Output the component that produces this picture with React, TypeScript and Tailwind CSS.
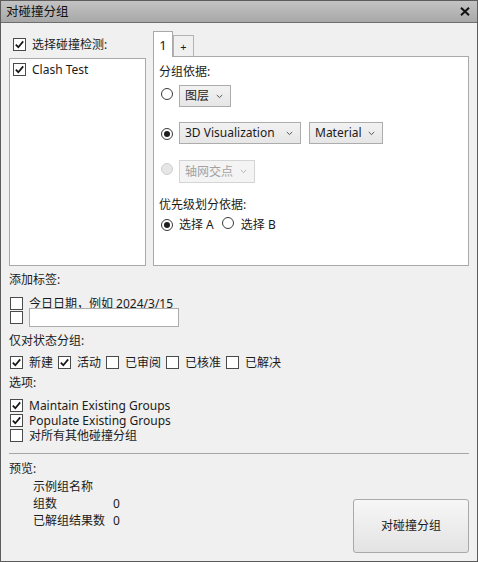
import React from 'react';

type CheckProps = {
  checked?: boolean;
};

const Check = ({ checked }: CheckProps) => (
  <span className="inline-flex h-[13px] w-[13px] shrink-0 items-center justify-center border border-[#4a4a4a] bg-white">
    {checked && (
      <svg width="11" height="11" viewBox="0 0 11 11">
        <path d="M1.8 5.6 L4.3 8.2 L9.2 2.4" fill="none" stroke="#151515" strokeWidth="1.7" />
      </svg>
    )}
  </span>
);

type RadioProps = {
  selected?: boolean;
  disabled?: boolean;
};

const Radio = ({ selected, disabled }: RadioProps) => (
  <span
    className={`inline-flex h-[12px] w-[12px] shrink-0 items-center justify-center rounded-full border ${
      disabled ? 'border-[#cfcfcf] bg-[#e6e6e6]' : 'border-[#3a3a3a] bg-white'
    }`}
  >
    {selected && <span className="h-[6px] w-[6px] rounded-full bg-[#1e1e1e]" />}
  </span>
);

type SelectProps = {
  label: string;
  width: string;
  disabled?: boolean;
};

const Select = ({ label, width, disabled }: SelectProps) => (
  <div
    className={`flex h-[22px] items-center justify-between border pl-[5px] pr-[7px] ${width} ${
      disabled
        ? 'border-[#d4d4d4] bg-[#f4f4f4] text-[#a2a2a2]'
        : 'border-[#acacac] bg-linear-to-b from-[#f2f2f2] to-[#e6e6e6]'
    }`}
  >
    <span>{label}</span>
    <svg width="7" height="5" viewBox="0 0 7 5">
      <path d="M0.8 1 L3.5 3.6 L6.2 1" fill="none" stroke={disabled ? '#b4b4b4' : '#555'} strokeWidth="1" />
    </svg>
  </div>
);

const CheckRow = ({ checked, label }: { checked?: boolean; label: string }) => (
  <div className="flex h-[15px] items-center gap-[6px] pl-[1px]">
    <Check checked={checked} />
    <span className="block h-[15px] leading-[15px]">{label}</span>
  </div>
);

export default function App() {
  const statuses = [
    { label: '新建', checked: true },
    { label: '活动', checked: true },
    { label: '已审阅', checked: false },
    { label: '已核准', checked: false },
    { label: '已解决', checked: false }
  ];

  return (
    <div
      className="flex h-[562px] w-[478px] flex-col border border-[#5c5c5c] bg-[#f0f0f0] text-[12px] leading-[16px] text-[#1b1b1b]"
      style={{ fontFamily: '"Noto Sans", "Noto Sans CJK SC", sans-serif' }}
    >
      {/* Title bar */}
      <div className="flex h-[22px] shrink-0 items-center justify-between border-b border-[#6e6e6e] bg-linear-to-b from-[#c3c3c3] to-[#a8a8a8] pl-[5px] pr-[7px]">
        <span className="text-[12.5px] text-[#111]">对碰撞分组</span>
        <svg width="10" height="9" viewBox="0 0 10 9">
          <path d="M1 0.8 L9 8.2 M9 0.8 L1 8.2" stroke="#111" strokeWidth="2" />
        </svg>
      </div>

      <div className="flex flex-1 flex-col px-[8px] pt-[8px]">
        {/* Top section */}
        <div className="flex gap-[7px]">
          <div className="flex w-[137px] flex-col pt-[7px]">
            <div className="flex h-[13px] items-center gap-[6px] pl-[4px]">
              <Check checked />
              <span>选择碰撞检测:</span>
            </div>
            <div className="mt-[7px] h-[208px] border border-[#a9a9a9] bg-white pl-[3px] pt-[4px]">
              <div className="flex h-[13px] items-center gap-[6px]">
                <Check checked />
                <span>Clash Test</span>
              </div>
            </div>
          </div>

          <div className="flex w-[316px] flex-col">
            <div className="flex items-end">
              <div className="relative z-10 flex h-[26px] w-[20px] items-center justify-center border border-b-0 border-[#a9a9a9] bg-white text-[13px]">
                1
              </div>
              <div className="flex h-[22px] w-[21px] items-center justify-center border border-b-0 border-[#b4b4b4] bg-[#f0f0f0] text-[11px]">
                +
              </div>
            </div>
            <div className="-mt-[1px] flex h-[210px] flex-col border border-[#a9a9a9] bg-white pl-[5px] pt-[7px]">
              <div className="h-[16px]">分组依据:</div>

              <div className="mt-[5px] flex items-start gap-[6px] pl-[2px]">
                <span className="mt-[3px]">
                  <Radio />
                </span>
                <Select label="图层" width="w-[52px]" />
              </div>

              <div className="mt-[15px] flex items-start pl-[2px]">
                <span className="mt-[3px] mr-[6px]">
                  <Radio selected />
                </span>
                <Select label="3D Visualization" width="w-[122px]" />
                <span className="ml-[8px]">
                  <Select label="Material" width="w-[74px]" />
                </span>
              </div>

              <div className="mt-[16px] flex items-start gap-[6px] pl-[2px]">
                <span className="mt-[3px]">
                  <Radio disabled />
                </span>
                <Select label="轴网交点" width="w-[76px] h-[23px]" disabled />
              </div>

              <div className="mt-[14px] h-[16px]">优先级划分依据:</div>

              <div className="mt-[4px] flex h-[16px] items-center pl-[2px]">
                <Radio selected />
                <span className="ml-[6px]">选择 A</span>
                <span className="ml-[8px]">
                  <Radio />
                </span>
                <span className="ml-[7px]">选择 B</span>
              </div>
            </div>
          </div>
        </div>

        {/* Tags */}
        <div className="mt-[6px] h-[16px]">添加标签:</div>
        <div className="mt-[9px] flex h-[13px] items-center gap-[6px] pl-[1px]">
          <Check />
          <span>今日日期，例如 2024/3/15</span>
        </div>
        <div className="-mt-[2px] flex items-start gap-[6px] pl-[1px]">
          <span className="mt-[3px]">
            <Check />
          </span>
          <div className="h-[19px] w-[150px] border border-[#acacac] bg-white" />
        </div>

        {/* Status */}
        <div className="mt-[5px] h-[16px]">仅对状态分组:</div>
        <div className="mt-[6px] flex h-[15px] items-center pl-[1px]">
          {statuses.map((s, i) => (
            <div key={i} className="mr-[5px] flex items-center gap-[6px]">
              <Check checked={s.checked} />
              <span>{s.label}</span>
            </div>
          ))}
        </div>

        {/* Options */}
        <div className="mt-[5px] h-[16px]">选项:</div>
        <div className="mt-[7px] flex flex-col">
          <CheckRow checked label="Maintain Existing Groups" />
          <CheckRow checked label="Populate Existing Groups" />
          <CheckRow label="对所有其他碰撞分组" />
        </div>

        <div className="mt-[10px] h-px bg-[#a6a6a6]" />

        {/* Preview */}
        <div className="flex flex-1 items-end justify-between pb-[8px]">
          <div className="flex flex-col self-start pt-[7px]">
            <div className="h-[16px]">预览:</div>
            <div className="mt-[1px] grid grid-cols-[80px_auto] pl-[24px] leading-[17px]">
              <span className="col-span-2">示例组名称</span>
              <span>组数</span>
              <span>0</span>
              <span>已解组结果数</span>
              <span>0</span>
            </div>
          </div>
          <button className="flex h-[54px] w-[116px] items-center justify-center rounded-[3px] border border-[#a9a9a9] bg-linear-to-b from-[#f7f7f7] to-[#e3e3e3]">
            对碰撞分组
          </button>
        </div>
      </div>
    </div>
  );
}
